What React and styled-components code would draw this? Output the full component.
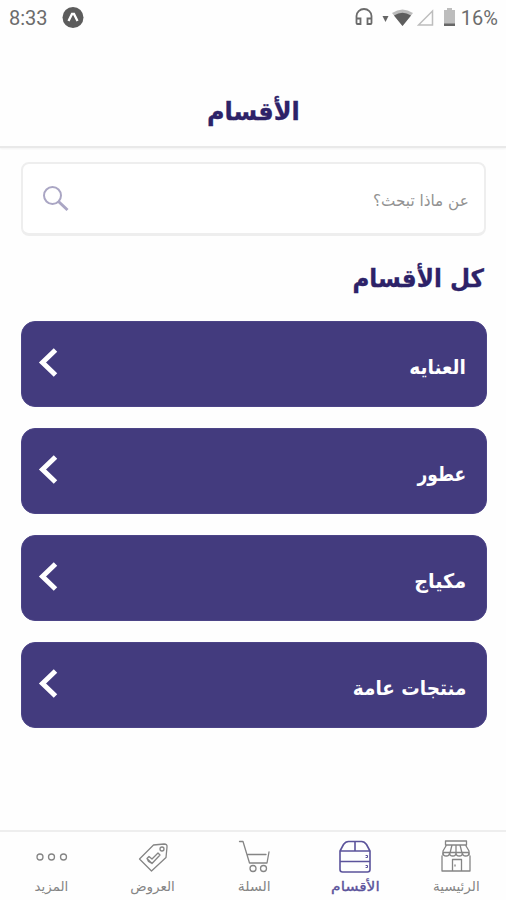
import React from "react";
import styled, { createGlobalStyle } from "styled-components";

const Global = createGlobalStyle`
  * { box-sizing: border-box; }
  body { margin: 0; background: #fefefe; }
`;

const Screen = styled.div`
  width: 506px;
  height: 900px;
  display: flex;
  flex-direction: column;
  overflow: hidden;
  background: #fefefe;
  font-family: "DejaVu Sans", sans-serif;
`;

const StatusBar = styled.div`
  height: 36px;
  flex: none;
  display: flex;
  align-items: center;
  padding: 0 8px 0 9px;
  font-family: Roboto, sans-serif;
  font-size: 20px;
  color: #6c6c6c;
`;

const StatusText = styled.span`
  line-height: 36px;
  margin-left: ${(p) => p.$gap || 0};
`;

const StatusIcon = styled.svg`
  display: block;
  flex: none;
  margin-left: ${(p) => p.$gap};
`;

const Spacer = styled.div`
  flex: 1;
`;

const Header = styled.header`
  height: 112px;
  flex: none;
  display: flex;
  justify-content: center;
  padding-top: 58px;
  border-bottom: 2px solid #e9e9e9;
  box-shadow: 0 1px 2px rgba(0, 0, 0, 0.05);
`;

const Label = styled.span`
  display: block;
  flex: none;
  white-space: nowrap;
  font-size: ${(p) => p.$size}px;
  line-height: ${(p) => p.$line || 36}px;
  font-weight: ${(p) => (p.$bold ? 700 : 400)};
  color: ${(p) => p.$color};
  padding-top: ${(p) => p.$drop || 0}px;
  -webkit-text-stroke: ${(p) => p.$weight || 0}px currentColor;
  transform: scaleX(${(p) => p.$stretch || 1});
  transform-origin: ${(p) => p.$origin || "right"} center;
`;

const Content = styled.main`
  flex: 1;
  padding: 14px 20px 0 21px;
  direction: rtl;
`;

const SearchBox = styled.div`
  height: 74px;
  display: flex;
  align-items: center;
  justify-content: space-between;
  padding: 3px 15px 0 20px;
  border: 2px solid #eeeeee;
  border-bottom-width: 3px;
  border-radius: 8px;
  background: #fff;
`;

const SearchIcon = styled.svg`
  display: block;
  margin-top: -2px;
`;

const SectionTitle = styled.div`
  height: 85px;
  padding: 25px 2px 0 0;
`;

const Categories = styled.div`
  display: flex;
  flex-direction: column;
  gap: 21px;
  margin-right: -1px;
`;

const Category = styled.div`
  height: 86px;
  display: flex;
  align-items: center;
  justify-content: space-between;
  padding: 0 20px 0 16px;
  border-radius: 14px;
  border: 1px solid #4c4487;
  background: #433b7e;
`;

const Chevron = styled.svg`
  display: block;
  margin-top: -4px;
`;

const TabBar = styled.nav`
  height: 70px;
  flex: none;
  display: grid;
  grid-template-columns: repeat(5, 1fr);
  direction: rtl;
  border-top: 2px solid #eeeeee;
`;

const Tab = styled.div`
  display: flex;
  flex-direction: column;
  align-items: center;
  padding: 6px 0 0 2px;
  color: ${(p) => (p.$active ? "#5b539b" : "#858585")};
`;

const TabIcon = styled.svg`
  display: block;
  width: 36px;
  height: 36px;
  fill: none;
  stroke: currentColor;
  stroke-width: 1.3;
  stroke-linejoin: round;
  stroke-linecap: round;
`;

const icons = {
  store: (
    <>
      <path d="M7.500 3h21v4h-21zM8.500 7 5 13v4M27.500 7 31 13v4M14 7l-2 8M18 7v8M22 7l2 8M5 14.500h26" />
      <path d="M5 15c0 4 6.500 4 6.500 0 0 4 6.500 4 6.500 0 0 4 6.500 4 6.500 0 0 4 6.500 4 6.500 0M4 18v15h28V18M14.500 33V21.500h9V33M17 27v1" />
    </>
  ),
  box: (
    <>
      <path strokeWidth="1.6" d="M3 13 6.500 6.500Q8.500 3.500 11.500 3.500h13q3 0 5 3L33 13zM18 4v9M3 13v18.500q0 2.500 2.500 2.500h25q2.500 0 2.500-2.500V13M3 23.500h30" />
      <path strokeWidth="1" d="M29 17.500h1.500v2H29M29 27.500h1.500v2H29" />
    </>
  ),
  cart: (
    <>
      <path d="M3.500 3.500H7L13.500 25H31L33 14M12 16.500h18" />
      <circle cx="17" cy="30.500" r="3" />
      <circle cx="27.500" cy="30.500" r="3" />
    </>
  ),
  tag: (
    <>
      <path d="M18.500 7 29 6q3.500 0 3 3l-1 10.500L16.500 33 4.500 21z" />
      <path d="m12 20.500 2-2 3 2.500 6-6 2 2-8 8.500zM12 20.500l1.500 3 3.500 2" />
      <circle cx="27" cy="11" r="2" />
    </>
  ),
  more: (
    <>
      <circle cx="6" cy="19" r="3" />
      <circle cx="17.500" cy="19" r="3" />
      <circle cx="29.500" cy="19" r="3" />
    </>
  ),
};

const categories = [
  { name: "العنايه", stretch: 0.93 },
  { name: "عطور", stretch: 0.85 },
  { name: "مكياج", stretch: 0.96 },
  { name: "منتجات عامة", stretch: 0.92 },
];

const tabs = [
  { name: "الرئيسية", icon: "store", stretch: 1.04 },
  { name: "الأقسام", icon: "box", stretch: 1.19, active: true },
  { name: "السلة", icon: "cart", stretch: 1.08 },
  { name: "العروض", icon: "tag", stretch: 1.04 },
  { name: "المزيد", icon: "more", stretch: 1.03 },
];

export default function App() {
  return (
    <Screen>
      <Global />
      <StatusBar>
        <StatusText>8:33</StatusText>
        <StatusIcon $gap="14px" width="22" height="22" viewBox="0 0 22 22">
          <circle cx="11" cy="10.500" r="10.500" fill="#5c5c5c" />
          <path d="M6.500 14 10 7h2l3.500 7" fill="none" stroke="#fff" strokeWidth="2.300" />
        </StatusIcon>
        <Spacer />
        <StatusIcon $gap="0" width="18" height="20" viewBox="0 0 18 20" fill="none" stroke="#6b6b6b" strokeWidth="1.800">
          <path d="M1.500 15V8a7.500 7 0 0 1 15 0v7M1.500 10.500h4V16h-3q-1 0-1-1zM16.500 10.500h-4V16h3q1 0 1-1z" />
        </StatusIcon>
        <StatusIcon $gap="9px" width="7" height="8" viewBox="0 0 7 8">
          <path d="M0.500 2h6L3.500 8z" fill="#666" />
        </StatusIcon>
        <StatusIcon $gap="3px" width="21" height="18" viewBox="0 0 21 18">
          <path d="M0 4Q10.500-3 21 4L10.500 17z" fill="#bcbcbc" />
          <path d="M2 6.500q8.500-5.500 17 0l-8.500 10.500z" fill="#5e5e5e" />
        </StatusIcon>
        <StatusIcon $gap="4px" width="17" height="18" viewBox="0 0 17 18">
          <path d="M1.500 16h14v-14z" fill="none" stroke="#bdbdbd" strokeWidth="1.500" />
        </StatusIcon>
        <StatusIcon $gap="10px" width="11" height="20" viewBox="0 0 11 20">
          <path d="M3 0h5v2h3v16H0V2h3z" fill="#bdbdbd" />
          <path d="M0 15.500h11v2.500H0z" fill="#666" />
        </StatusIcon>
        <StatusText $gap="6px">16%</StatusText>
      </StatusBar>
      <Header>
        <Label $size={25} $bold $weight={0.3} $color="#2d2268" $origin="center" $stretch={0.96}>الأقسام</Label>
      </Header>
      <Content>
        <SearchBox>
          <Label $size={16} $drop={2} $stretch={0.95} $color="#929292">عن ماذا تبحث؟</Label>
          <SearchIcon width="26" height="26" viewBox="0 0 26 26" fill="none" stroke="#aaa6c4">
            <circle cx="9.500" cy="9.500" r="8.500" strokeWidth="2" />
            <path d="m15.500 15.500 9 8.500" strokeWidth="3" />
          </SearchIcon>
        </SearchBox>
        <SectionTitle>
          <Label $size={25} $bold $weight={0.3} $color="#2d2268" $stretch={0.925}>كل الأقسام</Label>
        </SectionTitle>
        <Categories>
          {categories.map((c) => (
            <Category key={c.name}>
              <Label $size={20} $drop={5} $bold $color="#fff" $stretch={c.stretch}>{c.name}</Label>
              <Chevron width="20" height="30" viewBox="0 0 20 30" fill="none" stroke="#fff" strokeWidth="5">
                <path d="M17.500 3 4.500 15.500 17.500 28" />
              </Chevron>
            </Category>
          ))}
        </Categories>
      </Content>
      <TabBar>
        {tabs.map((t) => (
          <Tab key={t.name} $active={t.active}>
            <TabIcon viewBox="0 0 36 36">{icons[t.icon]}</TabIcon>
            <Label $size={13} $line={24} $drop={1} $weight={t.active ? 0.3 : 0} $color="currentColor" $origin="center" $stretch={t.stretch}>{t.name}</Label>
          </Tab>
        ))}
      </TabBar>
    </Screen>
  );
}
